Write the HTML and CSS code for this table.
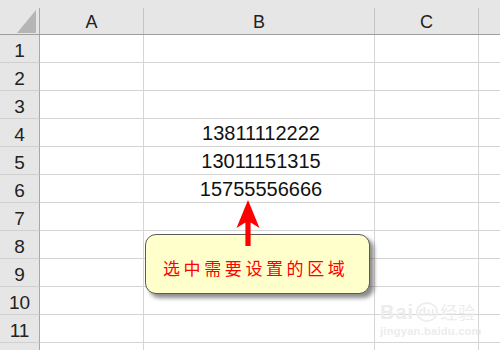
FILE: index.html
```html
<!DOCTYPE html>
<html lang="zh">
<head>
<meta charset="utf-8">
<title>Sheet</title>
<link rel="stylesheet" href="styles.css">
</head>
<body>
<div class="page">
  <div class="colhead">
    <div class="hcell corner">
      <svg class="tri" width="19" height="23" viewBox="0 0 19 23"><polygon points="19,0 19,23 0,23" fill="#b5b5b5"/></svg>
    </div>
    <div class="hcell">A</div>
    <div class="hcell">B</div>
    <div class="hcell">C</div>
    <div class="hcell last"></div>
  </div>
  <div class="grid">
    <div class="rh">1</div><div class="c"></div><div class="c"></div><div class="c"></div><div class="c"></div>
    <div class="rh">2</div><div class="c"></div><div class="c"></div><div class="c"></div><div class="c"></div>
    <div class="rh">3</div><div class="c"></div><div class="c"></div><div class="c"></div><div class="c"></div>
    <div class="rh">4</div><div class="c"></div><div class="c num">13811112222</div><div class="c"></div><div class="c"></div>
    <div class="rh">5</div><div class="c"></div><div class="c num">13011151315</div><div class="c"></div><div class="c"></div>
    <div class="rh">6</div><div class="c"></div><div class="c num">15755556666</div><div class="c"></div><div class="c"></div>
    <div class="rh">7</div><div class="c"></div><div class="c"></div><div class="c"></div><div class="c"></div>
    <div class="rh">8</div><div class="c"></div><div class="c"></div><div class="c"></div><div class="c"></div>
    <div class="rh">9</div><div class="c"></div><div class="c"></div><div class="c"></div><div class="c"></div>
    <div class="rh">10</div><div class="c"></div><div class="c"></div><div class="c"></div><div class="c"></div>
    <div class="rh">11</div><div class="c"></div><div class="c"></div><div class="c"></div><div class="c"></div>
    <div class="rh"></div><div class="c"></div><div class="c"></div><div class="c"></div><div class="c"></div>
  </div>

  <div class="callout">选中需要设置的区域</div>
  <svg class="arrow" width="24" height="46" viewBox="0 0 24 46">
    <path d="M12 0 L23.5 28 L14.6 22.5 L14.6 46 L9.4 46 L9.4 22.5 L0.5 28 Z" fill="#ff0000"/>
  </svg>

  <div class="watermark">
    <div class="wm-top"><span>Bai</span><span class="paw">du</span><span class="wm-cn">经验</span></div>
    <div class="wm-url">jingyan.baidu.com</div>
  </div>
</div>
</body>
</html>
```

FILE: styles.css
```css
* { box-sizing: border-box; }
html, body { margin: 0; padding: 0; background: #ffffff; }
.page {
  position: relative;
  width: 500px;
  height: 350px;
  overflow: hidden;
  font-family: "Liberation Sans", Arial, sans-serif;
  color: #1a1a1a;
}
.colhead {
  display: grid;
  grid-template-columns: 40px 104px 231px 104px 1fr;
  background: #e6e6e6;
  padding-top: 8px;
  border-bottom: 1px solid #9d9d9d;
}
.hcell {
  height: 26px;
  border-right: 1px solid #c4c4c4;
  display: flex;
  align-items: center;
  justify-content: center;
  font-size: 18px;
  line-height: 26px;
  padding-top: 1px;
  color: #222;
}
.hcell.corner {
  border-right: 1px solid #a8a8a8;
  justify-content: flex-start;
  align-items: flex-start;
  padding: 2px 0 0 17px;
}
.hcell.last { border-right: none; }
.tri { display: block; }
.grid {
  display: grid;
  grid-template-columns: 40px 104px 231px 104px 1fr;
  grid-auto-rows: 28px;
}
.rh {
  background: #e6e6e6;
  border-right: 1px solid #a8a8a8;
  border-bottom: 1px solid #d0d0d0;
  font-size: 19px;
  line-height: 28px;
  padding-top: 2px;
  text-align: center;
  color: #222;
}
.c {
  border-right: 1px solid #d4d4d4;
  border-bottom: 1px solid #d4d4d4;
}
.c:nth-child(5n) { border-right: none; }
.num {
  font-size: 20px;
  line-height: 28px;
  text-align: center;
  padding-left: 4px;
  color: #111;
}
.callout {
  position: absolute;
  left: 145px;
  top: 234px;
  width: 225px;
  height: 60px;
  background: #ffffcc;
  border: 1.5px solid #5a5a5a;
  border-radius: 11px;
  box-shadow: 4px 4px 4px rgba(0,0,0,0.45);
  color: #ff0000;
  font-family: "Noto Sans CJK SC", "Noto Sans", sans-serif;
  font-size: 17px;
  letter-spacing: 3.6px;
  line-height: 60px;
  padding: 3px 0 0 17px;
  white-space: nowrap;
}
.arrow {
  position: absolute;
  left: 236px;
  top: 200px;
}
.watermark {
  position: absolute;
  left: 380px;
  top: 302px;
  color: #ececec;
  text-align: center;
  pointer-events: none;
}
.wm-top {
  display: flex;
  align-items: center;
  font-size: 20px;
  font-weight: bold;
  line-height: 20px;
  letter-spacing: 1px;
}
.paw {
  font-size: 12px;
  width: 22px;
  height: 20px;
  border: 2px solid #eeeeee;
  border-radius: 50%;
  line-height: 16px;
  margin: 0 2px;
}
.wm-cn {
  font-family: "Noto Sans CJK SC", sans-serif;
  font-size: 17px;
  font-weight: normal;
}
.wm-url {
  font-size: 11px;
  font-weight: bold;
  margin-top: 3px;
  letter-spacing: 0.3px;
}
```
